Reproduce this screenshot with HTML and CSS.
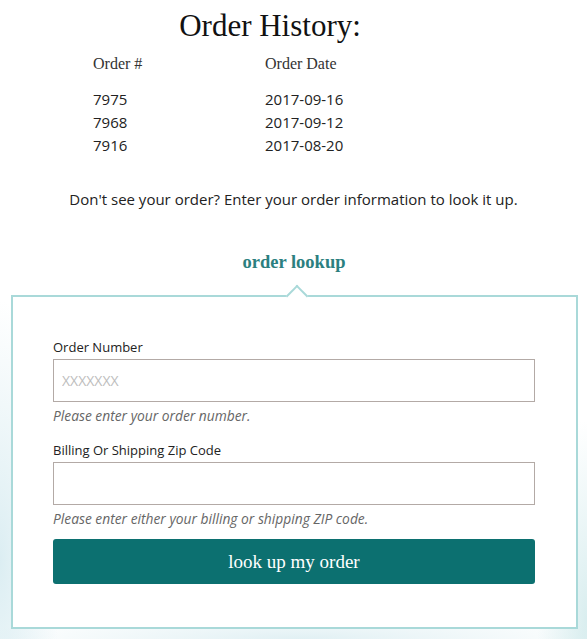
FILE: index.html
```html
<!DOCTYPE html>
<html>
<head>
<meta charset="utf-8">
<link rel="stylesheet" href="styles.css">
</head>
<body>
<div class="page">
  <section class="history">
    <h1 class="title">Order History:</h1>
    <div class="table">
      <div class="row head"><span class="c1">Order #</span><span class="c2">Order Date</span></div>
      <div class="rows">
        <div class="row"><span class="c1">7975</span><span class="c2">2017-09-16</span></div>
        <div class="row"><span class="c1">7968</span><span class="c2">2017-09-12</span></div>
        <div class="row"><span class="c1">7916</span><span class="c2">2017-08-20</span></div>
      </div>
    </div>
  </section>
  <p class="intro">Don't see your order? Enter your order information to look it up.</p>
  <h2 class="lookup-title">order lookup</h2>
  <div class="box">
    <span class="notch"></span>
    <form class="form">
      <label class="label">Order Number</label>
      <input class="input" type="text" placeholder="XXXXXXX">
      <p class="help">Please enter your order number.</p>
      <label class="label">Billing Or Shipping Zip Code</label>
      <input class="input" type="text">
      <p class="help">Please enter either your billing or shipping ZIP code.</p>
      <button class="btn" type="button">look up my order</button>
    </form>
  </div>
</div>
</body>
</html>
```
FILE: styles.css
```css
html, body {
  margin: 0;
  padding: 0;
}
body {
  width: 587px;
  height: 639px;
  overflow: hidden;
  background:
    radial-gradient(ellipse 60px 260px at 0 560px, rgba(196, 226, 234, 0.6), rgba(255,255,255,0) 100%),
    radial-gradient(ellipse 50px 200px at 587px 620px, rgba(196, 228, 230, 0.65), rgba(255,255,255,0) 100%),
    radial-gradient(ellipse 320px 30px at 300px 639px, rgba(205, 230, 236, 0.6), rgba(255,255,255,0) 100%),
    #ffffff;
  font-family: "Open Sans", "Liberation Sans", sans-serif;
  color: #222;
}
.page {
  padding-top: 7px;
}
.history {
  margin-left: 93px;
  width: 354px;
}
.title {
  margin: 0;
  text-align: center;
  font-family: "Liberation Serif", serif;
  font-weight: normal;
  font-size: 31px;
  line-height: 38px;
  color: #111;
}
.table {
  margin-top: 7px;
}
.row {
  display: flex;
  font-size: 15px;
  line-height: 23px;
  color: #222;
}
.row.head {
  font-family: "Liberation Serif", serif;
  font-size: 16px;
  color: #333;
}
.rows {
  margin-top: 13px;
}
.c1 {
  width: 172px;
}
.intro {
  margin: 31px 0 0;
  text-align: center;
  font-size: 15px;
  line-height: 22px;
  color: #222;
}
.lookup-title {
  margin: 40px 0 0;
  text-align: center;
  font-family: "Liberation Serif", serif;
  font-size: 18.5px;
  line-height: 24px;
  font-weight: bold;
  color: #2b7f80;
  padding-left: 1px;
}
.box {
  position: relative;
  margin: 21px 9px 0 11px;
  border: 2px solid #a9d9d9;
  background: #fff;
  padding: 41px 41px 43px 40px;
}
.notch {
  position: absolute;
  top: -9px;
  left: 276px;
  width: 14px;
  height: 14px;
  background: #fff;
  border-top: 2px solid #a9d9d9;
  border-left: 2px solid #a9d9d9;
  transform: rotate(45deg);
}
.form {
  display: flex;
  flex-direction: column;
}
.label {
  font-size: 13px;
  line-height: 18px;
  color: #222;
  margin-bottom: 3px;
}
.input {
  box-sizing: border-box;
  height: 43px;
  border: 1px solid #b3aaa6;
  padding: 0 8px;
  font-family: "Open Sans", sans-serif;
  font-size: 14px;
  background: #fff;
  outline: none;
}
.input::placeholder {
  color: #bdbdbd;
}
.help {
  margin: 5px 0 0;
  font-size: 13.8px;
  line-height: 18px;
  font-style: italic;
  color: #666;
}
.help + .label {
  margin-top: 16px;
}
.help + .btn {
  margin-top: 11px;
}
.btn {
  height: 45px;
  border: none;
  border-radius: 3px;
  background: #0c7070;
  color: #fff;
  font-family: "Liberation Serif", serif;
  font-size: 19px;
  cursor: pointer;
}
```
